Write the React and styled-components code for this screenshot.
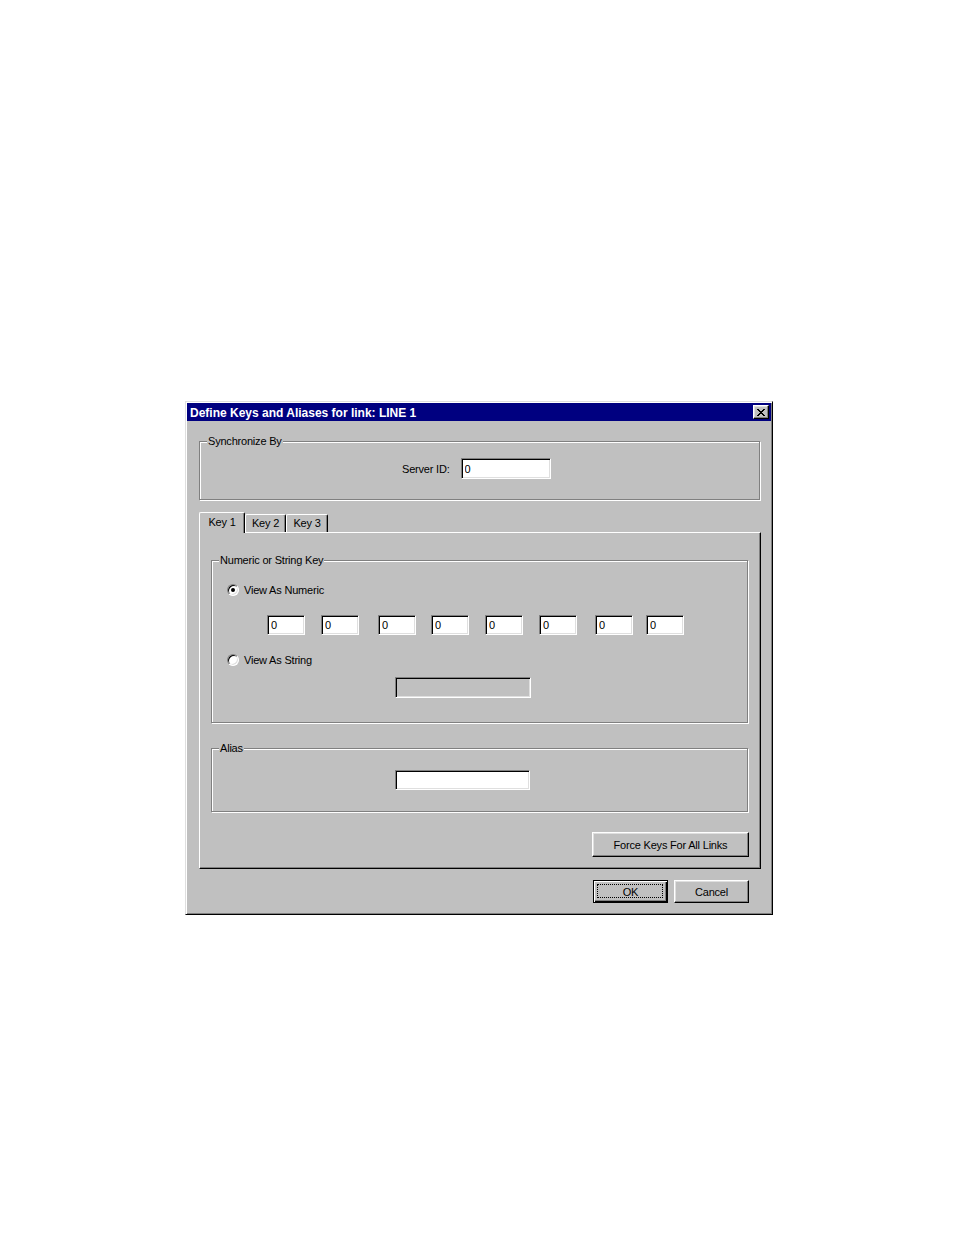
import React from "react";
import styled, { createGlobalStyle } from "styled-components";

const GlobalStyle = createGlobalStyle`
  *, *::before, *::after { box-sizing: border-box; }
  html, body { margin: 0; padding: 0; background: #ffffff; }
  body {
    font-family: "Liberation Sans", Arial, sans-serif;
    font-size: 11px;
    letter-spacing: -0.2px;
    color: #000;
  }
`;

const Page = styled.div`
  padding: 401px 0 0 185px;
  min-height: 1235px;
`;

const Dialog = styled.div`
  width: 588px;
  height: 514px;
  background: #c0c0c0;
  border: 1px solid;
  border-color: #dfdfdf #000 #000 #dfdfdf;
  box-shadow: inset 1px 1px 0 #fff, inset -1px -1px 0 #808080;
  padding: 1px;
  display: flex;
  flex-direction: column;
`;

const TitleBar = styled.div`
  height: 18px;
  background: #000080;
  display: flex;
  align-items: center;
  justify-content: space-between;
  padding: 0 2px 0 3px;
`;

const Title = styled.span`
  color: #fff;
  font-weight: bold;
  font-size: 12px;
  letter-spacing: 0;
  line-height: 14px;
  padding-top: 1px;
`;

const CloseButton = styled.div`
  width: 16px;
  height: 14px;
  background: #c0c0c0;
  border: 1px solid;
  border-color: #fff #000 #000 #fff;
  box-shadow: inset -1px -1px 0 #808080, inset 1px 1px 0 #dfdfdf;
  display: flex;
  align-items: center;
  justify-content: center;
  padding-right: 1px;
`;

const Body = styled.div`
  flex: 1;
  padding: 20px 10px 0 12px;
  display: flex;
  flex-direction: column;
`;

const GroupBox = styled.div`
  position: relative;
  height: ${(p) => p.$height}px;
  margin: 0 1px 1px 0;
  border: 1px solid #808080;
  box-shadow: inset 1px 1px 0 #fff, 1px 1px 0 #fff;
  display: flex;
  flex-direction: column;
  margin-top: ${(p) => p.$mt || 0}px;
`;

const GroupLabel = styled.span`
  position: absolute;
  left: 7px;
  top: -8px;
  padding: 0 1px;
  line-height: 14px;
  background: #c0c0c0;
`;

const ServerRow = styled.div`
  display: flex;
  align-items: center;
  padding: 16px 0 0 202px;
  gap: 11px;
`;

const Label = styled.span`
  line-height: 14px;
`;

const TextInput = styled.input`
  width: ${(p) => p.$w}px;
  height: ${(p) => p.$h || 20}px;
  margin-left: ${(p) => p.$ml || 0}px;
  border: 1px solid;
  border-color: #808080 #fff #fff #808080;
  box-shadow: inset 1px 1px 0 #000, inset -1px -1px 0 #dfdfdf;
  background: ${(p) => (p.disabled ? "#c0c0c0" : "#fff")};
  font-family: "Liberation Sans", Arial, sans-serif;
  font-size: 11px;
  color: #000;
  -webkit-text-fill-color: #000;
  padding: 0 2px 0 3px;
  margin-top: ${(p) => p.$mt || 0}px;
  outline: none;
  flex: none;
`;

const TabsArea = styled.div`
  margin-top: 11px;
  display: flex;
  flex-direction: column;
`;

const TabStrip = styled.div`
  display: flex;
  align-items: flex-end;
  height: 20px;
`;

const Tab = styled.div`
  position: relative;
  z-index: ${(p) => (p.$active ? 1 : 0)};
  width: ${(p) => p.$w}px;
  height: ${(p) => (p.$active ? 21 : 18)}px;
  margin-bottom: ${(p) => (p.$active ? -1 : 0)}px;
  background: #c0c0c0;
  border-top: 1px solid #fff;
  border-left: 1px solid #fff;
  border-right: 1px solid #000;
  border-radius: 2px 2px 0 0;
  box-shadow: inset -1px 0 0 #808080;
  display: flex;
  justify-content: center;
  padding-top: ${(p) => (p.$active ? 2 : 1)}px;
  line-height: 14px;
`;

const TabPanel = styled.div`
  height: 337px;
  border: 1px solid;
  border-color: #fff #000 #000 #fff;
  box-shadow: inset -1px -1px 0 #808080;
  padding: 27px 11px 0 11px;
  display: flex;
  flex-direction: column;
`;

const RadioRow = styled.div`
  display: flex;
  align-items: center;
  height: 16px;
  gap: 5px;
  padding-left: 15px;
  margin-top: ${(p) => p.$mt}px;
`;

const Radio = styled.span`
  position: relative;
  width: 12px;
  height: 12px;
  border-radius: 50%;
  border: 1px solid;
  border-color: #808080 #fff #fff #808080;
  background: #fff;
  box-shadow: inset 1px 1px 0 #000, inset -1px -1px 0 #dfdfdf;
  flex: none;

  &::after {
    content: "";
    display: ${(p) => (p.$checked ? "block" : "none")};
    position: absolute;
    left: 3px;
    top: 3px;
    width: 4px;
    height: 4px;
    border-radius: 50%;
    background: #000;
  }
`;

const NumRow = styled.div`
  display: flex;
  padding-left: 55px;
  margin-top: 17px;
`;

const PanelFooter = styled.div`
  display: flex;
  justify-content: flex-end;
  margin-top: 19px;
`;

const Button = styled.div`
  position: relative;
  width: ${(p) => p.$w || 75}px;
  height: ${(p) => p.$h || 23}px;
  background: #c0c0c0;
  border: 1px solid;
  border-color: ${(p) => (p.$default ? "#000" : "#fff #000 #000 #fff")};
  box-shadow: ${(p) =>
    p.$default
      ? "inset 1px 1px 0 #fff, inset -1px -1px 0 #000, inset -2px -2px 0 #808080"
      : "inset -1px -1px 0 #808080, inset 1px 1px 0 #dfdfdf"};
  display: flex;
  align-items: center;
  justify-content: center;
  line-height: 14px;
  flex: none;
`;

const FocusRing = styled.span`
  position: absolute;
  left: 3px;
  top: 3px;
  right: 4px;
  bottom: 4px;
  border: 1px dotted #000;
`;

const ButtonRow = styled.div`
  display: flex;
  justify-content: flex-end;
  gap: 6px;
  margin-top: 11px;
  padding-right: 12px;
`;

const CloseGlyph = () => (
  <svg width="8" height="7" viewBox="0 0 8 7" shapeRendering="crispEdges">
    <path
      fill="#000"
      d="M0 0h2v1h-2z M6 0h2v1h-2z M1 1h2v1h-2z M5 1h2v1h-2z M2 2h4v1h-4z M3 3h2v1h-2z M2 4h4v1h-4z M1 5h2v1h-2z M5 5h2v1h-2z M0 6h2v1h-2z M6 6h2v1h-2z"
    />
  </svg>
);

const numeric = [0, 16, 19, 15, 16, 16, 18, 13];

export default function App() {
  return (
    <>
      <GlobalStyle />
      <Page>
        <Dialog>
          <TitleBar>
            <Title>Define Keys and Aliases for link: LINE 1</Title>
            <CloseButton>
              <CloseGlyph />
            </CloseButton>
          </TitleBar>
          <Body>
            <GroupBox $height={59}>
              <GroupLabel>Synchronize By</GroupLabel>
              <ServerRow>
                <Label>Server ID:</Label>
                <TextInput readOnly defaultValue="0" $w={90} $h={21} />
              </ServerRow>
            </GroupBox>

            <TabsArea>
              <TabStrip>
                <Tab $active $w={46}>Key 1</Tab>
                <Tab $w={41}>Key 2</Tab>
                <Tab $w={42}>Key 3</Tab>
              </TabStrip>
              <TabPanel>
                <GroupBox $height={163}>
                  <GroupLabel>Numeric or String Key</GroupLabel>
                  <RadioRow $mt={21}>
                    <Radio $checked />
                    <Label>View As Numeric</Label>
                  </RadioRow>
                  <NumRow>
                    {numeric.map((g, i) => (
                      <TextInput key={i} readOnly defaultValue="0" $w={38} $h={20} $ml={g} />
                    ))}
                  </NumRow>
                  <RadioRow $mt={17}>
                    <Radio />
                    <Label>View As String</Label>
                  </RadioRow>
                  <TextInput disabled $w={136} $h={21} $ml={183} $mt={9} />
                </GroupBox>

                <GroupBox $height={64} $mt={24}>
                  <GroupLabel>Alias</GroupLabel>
                  <TextInput readOnly defaultValue="" $w={135} $h={20} $ml={183} $mt={21} />
                </GroupBox>

                <PanelFooter>
                  <Button $w={157} $h={25}>Force Keys For All Links</Button>
                </PanelFooter>
              </TabPanel>
            </TabsArea>

            <ButtonRow>
              <Button $default>
                <FocusRing />
                OK
              </Button>
              <Button>Cancel</Button>
            </ButtonRow>
          </Body>
        </Dialog>
      </Page>
    </>
  );
}
